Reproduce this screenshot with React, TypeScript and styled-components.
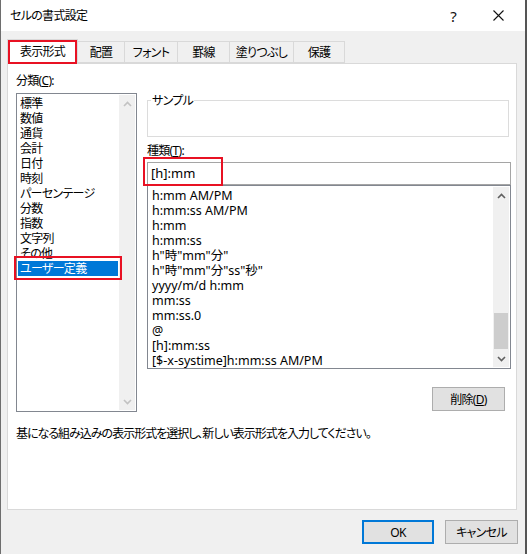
import styled, { createGlobalStyle } from "styled-components";

const GlobalStyle = createGlobalStyle`
  html, body {
    margin: 0;
    padding: 0;
    background: #ffffff;
  }
  body {
    font-family: "Noto Sans", "Noto Sans CJK JP", sans-serif;
    font-size: 12px;
    color: #000;
    font-feature-settings: "palt" 1;
    letter-spacing: -0.7px;
  }
`;

const tabs = [
  { label: "表示形式", w: 71 },
  { label: "配置", w: 48 },
  { label: "フォント", w: 54 },
  { label: "罫線", w: 53 },
  { label: "塗りつぶし", w: 65 },
  { label: "保護", w: 52 },
];

const categories = [
  "標準",
  "数値",
  "通貨",
  "会計",
  "日付",
  "時刻",
  "パーセンテージ",
  "分数",
  "指数",
  "文字列",
  "その他",
  "ユーザー定義",
];

const formats = [
  "h:mm AM/PM",
  "h:mm:ss AM/PM",
  "h:mm",
  "h:mm:ss",
  'h"時"mm"分"',
  'h"時"mm"分"ss"秒"',
  "yyyy/m/d h:mm",
  "mm:ss",
  "mm:ss.0",
  "@",
  "[h]:mm:ss",
  "[$-x-systime]h:mm:ss AM/PM",
];

function Chevron({ down, disabled }: { down?: boolean; disabled?: boolean }) {
  return (
    <svg width="9" height="6" viewBox="0 0 9 6">
      <polyline
        points={down ? "1,1 4.5,4.5 8,1" : "1,5 4.5,1.5 8,5"}
        fill="none"
        stroke={disabled ? "#c2c2c2" : "#606060"}
        strokeWidth="1.6"
      />
    </svg>
  );
}

function ScrollBar({ disabled, thumb }: { disabled?: boolean; thumb?: boolean }) {
  return (
    <Track>
      <Arrow>
        <Chevron disabled={disabled} />
      </Arrow>
      <Rail>{thumb && <Thumb />}</Rail>
      <Arrow>
        <Chevron down disabled={disabled} />
      </Arrow>
    </Track>
  );
}

export default function App() {
  return (
    <>
      <GlobalStyle />
      <Window>
        <TitleBar>
          <Title>セルの書式設定</Title>
          <TitleButton>?</TitleButton>
          <TitleButton>
            <svg width="11" height="11" viewBox="0 0 11 11">
              <path d="M0.5 0.5 L10.5 10.5 M10.5 0.5 L0.5 10.5" stroke="#111" strokeWidth="1.1" />
            </svg>
          </TitleButton>
        </TitleBar>

        <Content>
          <TabStrip>
            {tabs.map((t, i) => (
              <Tab key={t.label} $w={t.w} $active={i === 0}>
                {t.label}
              </Tab>
            ))}
          </TabStrip>

          <Panel>
            <Main>
              <LeftCol>
                <FieldLabel>
                  分類(<u>C</u>):
                </FieldLabel>
                <ListBox $height={319}>
                  <Items>
                    {categories.map((c, i) => (
                      <CategoryItem key={c} $selected={i === categories.length - 1}>
                        {c}
                      </CategoryItem>
                    ))}
                  </Items>
                  <ScrollBar disabled />
                </ListBox>
              </LeftCol>

              <RightCol>
                <Sample>
                  <Legend>サンプル</Legend>
                </Sample>
                <TypeLabel>
                  種類(<u>T</u>):
                </TypeLabel>
                <TypeInput>[h]:mm</TypeInput>
                <ListBox $height={184}>
                  <Items $pad={4}>
                    {formats.map((f) => (
                      <FormatItem key={f}>{f}</FormatItem>
                    ))}
                  </Items>
                  <ScrollBar thumb />
                </ListBox>
                <ButtonRow>
                  <Button $w={73}>
                    削除(<u>D</u>)
                  </Button>
                </ButtonRow>
              </RightCol>
            </Main>

            <Description>
              基になる組み込みの表示形式を選択し、新しい表示形式を入力してください。
            </Description>
          </Panel>
        </Content>

        <Footer>
          <Button $w={72} $primary>
            OK
          </Button>
          <Button $w={73}>キャンセル</Button>
        </Footer>
      </Window>
    </>
  );
}

const Window = styled.div`
  width: 527px;
  height: 554px;
  box-sizing: border-box;
  border-left: 1px solid #6e6e6e;
  border-right: 2px solid #555;
  background: #f0f0f0;
  display: flex;
  flex-direction: column;
`;

const TitleBar = styled.div`
  height: 31px;
  flex-shrink: 0;
  background: #fff;
  display: flex;
  align-items: center;
  padding: 0 4px 0 9px;
`;

const Title = styled.div`
  flex: 1;
  font-size: 12px;
  line-height: 15px;
  color: #000;
`;

const TitleButton = styled.div`
  width: 45px;
  height: 31px;
  display: flex;
  align-items: center;
  justify-content: center;
  font-size: 15px;
  letter-spacing: 0;
  color: #111;
`;

const Content = styled.div`
  padding: 0 8px 0 6px;
`;

const TabStrip = styled.div`
  height: 32px;
  display: flex;
  align-items: flex-end;
`;

const Tab = styled.div<{ $w: number; $active?: boolean }>`
  position: relative;
  box-sizing: border-box;
  width: ${(p) => p.$w}px;
  height: ${(p) => (p.$active ? 25 : 22)}px;
  margin-left: ${(p) => (p.$active ? 0 : -1)}px;
  margin-bottom: ${(p) => (p.$active ? -1 : 0)}px;
  z-index: ${(p) => (p.$active ? 1 : 0)};
  border: 1px solid #d9d9d9;
  border-bottom: ${(p) => (p.$active ? "none" : "1px solid #d9d9d9")};
  background: ${(p) => (p.$active ? "#fff" : "#f0f0f0")};
  display: flex;
  align-items: center;
  justify-content: center;
  line-height: 15px;
  padding-bottom: ${(p) => (p.$active ? 2 : 0)}px;

  ${(p) =>
    p.$active &&
    `
    &::after {
      content: "";
      position: absolute;
      inset: 0 0 0 0;
      border: 2px solid #e81123;
    }
  `}
`;

const Panel = styled.div`
  box-sizing: border-box;
  height: 447px;
  background: #fff;
  border: 1px solid #d9d9d9;
  padding: 9px 5px 0 8px;
`;

const Main = styled.div`
  display: grid;
  grid-template-columns: 121px 1fr;
  column-gap: 10px;
`;

const LeftCol = styled.div`
  display: flex;
  flex-direction: column;
`;

const RightCol = styled.div`
  display: flex;
  flex-direction: column;
  padding-top: 20px;
`;

const FieldLabel = styled.div`
  line-height: 15px;
  margin-bottom: 5px;
`;

const ListBox = styled.div<{ $height: number }>`
  box-sizing: border-box;
  height: ${(p) => p.$height}px;
  border: 1px solid #828790;
  display: flex;
  background: #fff;
`;

const Items = styled.div<{ $pad?: number }>`
  flex: 1;
  min-width: 0;
  padding-top: 2px;
  padding-left: ${(p) => p.$pad ?? 0}px;
`;

const CategoryItem = styled.div<{ $selected?: boolean }>`
  position: relative;
  line-height: 15px;
  margin: 0 1px;
  padding-left: 2px;
  white-space: nowrap;
  background: ${(p) => (p.$selected ? "#0078d7" : "transparent")};
  color: ${(p) => (p.$selected ? "#fff" : "#000")};

  ${(p) =>
    p.$selected &&
    `
    &::after {
      content: "";
      position: absolute;
      left: -4px;
      right: -4px;
      top: -5px;
      bottom: -4px;
      border: 2px solid #e81123;
    }
  `}
`;

const FormatItem = styled.div`
  line-height: 15px;
  font-size: 12.5px;
  letter-spacing: 0;
  white-space: nowrap;
`;

const Track = styled.div`
  width: 16px;
  margin: 1px 1px 1px 0;
  background: #f0f0f0;
  display: flex;
  flex-direction: column;
`;

const Arrow = styled.div`
  height: 17px;
  display: flex;
  align-items: center;
  justify-content: center;
`;

const Rail = styled.div`
  flex: 1;
  display: flex;
  flex-direction: column;
  justify-content: flex-end;
`;

const Thumb = styled.div`
  height: 36px;
  margin: 0 1px 1px 1px;
  background: #cdcdcd;
`;

const Sample = styled.fieldset`
  box-sizing: border-box;
  height: 44px;
  margin: 0;
  padding: 0;
  border: 1px solid #dcdcdc;
  width: 362px;
`;

const Legend = styled.legend`
  margin-left: 3px;
  padding: 0 1px;
  line-height: 15px;
  font-size: 12px;
`;

const TypeLabel = styled.div`
  line-height: 15px;
  margin-top: 6px;
  margin-bottom: 4px;
`;

const TypeInput = styled.div`
  position: relative;
  box-sizing: border-box;
  height: 23px;
  border: 1px solid #a5a5a5;
  padding-left: 3px;
  display: flex;
  align-items: center;
  line-height: 15px;
  font-size: 13px;
  letter-spacing: 0;

  &::after {
    content: "";
    position: absolute;
    left: -5px;
    top: -6px;
    width: 80px;
    height: 29px;
    border: 2px solid #e81123;
    box-sizing: border-box;
  }
`;

const ButtonRow = styled.div`
  display: flex;
  justify-content: flex-end;
  padding-right: 6px;
  margin-top: 18px;
`;

const Button = styled.div<{ $w: number; $primary?: boolean }>`
  box-sizing: border-box;
  width: ${(p) => p.$w}px;
  height: 24px;
  background: #e1e1e1;
  border: ${(p) => (p.$primary ? "2px solid #0078d7" : "1px solid #adadad")};
  display: flex;
  align-items: center;
  justify-content: center;
  line-height: 15px;
`;

const Description = styled.div`
  line-height: 15px;
  margin-top: 14px;
  letter-spacing: -1px;
`;

const Footer = styled.div`
  display: flex;
  justify-content: flex-end;
  gap: 11px;
  padding: 10px 7px 0 0;
`;
